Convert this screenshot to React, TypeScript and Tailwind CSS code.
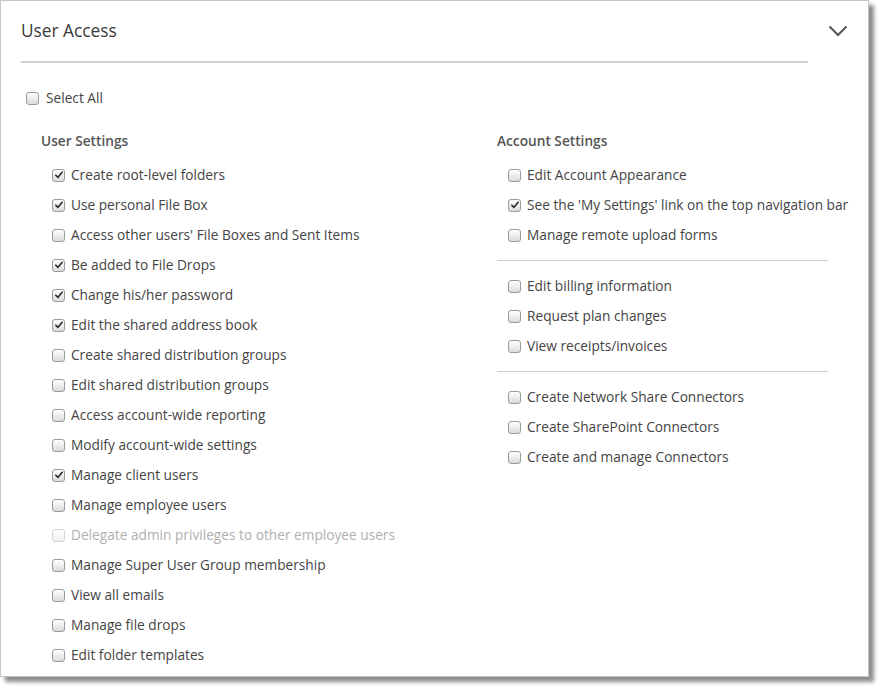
import React from "react";

type Item = { label: string; checked?: boolean; disabled?: boolean };

const userSettings: Item[] = [
  { label: "Create root-level folders", checked: true },
  { label: "Use personal File Box", checked: true },
  { label: "Access other users' File Boxes and Sent Items" },
  { label: "Be added to File Drops", checked: true },
  { label: "Change his/her password", checked: true },
  { label: "Edit the shared address book", checked: true },
  { label: "Create shared distribution groups" },
  { label: "Edit shared distribution groups" },
  { label: "Access account-wide reporting" },
  { label: "Modify account-wide settings" },
  { label: "Manage client users", checked: true },
  { label: "Manage employee users" },
  { label: "Delegate admin privileges to other employee users", disabled: true },
  { label: "Manage Super User Group membership" },
  { label: "View all emails" },
  { label: "Manage file drops" },
  { label: "Edit folder templates" },
];

const accountGroups: Item[][] = [
  [
    { label: "Edit Account Appearance" },
    { label: "See the 'My Settings' link on the top navigation bar", checked: true },
    { label: "Manage remote upload forms" },
  ],
  [
    { label: "Edit billing information" },
    { label: "Request plan changes" },
    { label: "View receipts/invoices" },
  ],
  [
    { label: "Create Network Share Connectors" },
    { label: "Create SharePoint Connectors" },
    { label: "Create and manage Connectors" },
  ],
];

// fake native checkbox, the headless one is blue when ticked
const Box = ({ checked, disabled }: { checked?: boolean; disabled?: boolean }) => (
  <span
    className={
      disabled
        ? "flex h-[13px] w-[13px] shrink-0 items-center justify-center rounded-[3px] border border-[#d4d4d4] bg-gradient-to-b from-white to-[#f0f0f0]"
        : "flex h-[13px] w-[13px] shrink-0 items-center justify-center rounded-[3px] border border-[#9a9a9a] bg-gradient-to-b from-white to-[#dcdcdc]"
    }
  >
    {checked && (
      <svg viewBox="0 0 12 12" className="h-[10px] w-[10px]">
        <path d="M2.2 6.3 L4.8 8.8 L9.8 2.8" fill="none" stroke="#2b2b2b" strokeWidth="2" strokeLinecap="round" strokeLinejoin="round" />
      </svg>
    )}
  </span>
);

const Row = ({ item }: { item: Item }) => (
  <div className="flex h-[30px] items-center pl-[11px]">
    <Box checked={item.checked} disabled={item.disabled} />
    <span className={item.disabled ? "ml-[6px] whitespace-nowrap text-[#b0b0b0]" : "ml-[6px] whitespace-nowrap text-[#444]"}>
      {item.label}
    </span>
  </div>
);

export default function App() {
  return (
    <div className="min-h-screen bg-white" style={{ fontFamily: '"Open Sans", "Noto Sans", sans-serif' }}>
      <div className="h-[677px] w-[869px] border border-[#c6c6c6] bg-white pl-[20px] shadow-[5px_5px_4px_rgba(0,0,0,0.45)]">
        {/* header */}
        <div className="flex items-start">
          <div className="h-[62px] w-[787px] border-b-2 border-[#cfcfcf] pt-[18px] text-[17.3px] leading-6 text-[#3a3a3a]">
            User Access
          </div>
          <svg viewBox="0 0 20 12" className="ml-[20px] mt-[24px] h-[12px] w-[20px]">
            <path d="M1.5 1.5 L10 10 L18.5 1.5" fill="none" stroke="#555" strokeWidth="2" />
          </svg>
        </div>

        <div className="mt-[20px] flex h-[30px] items-center pl-[5px] text-[13.7px]">
          <Box />
          <span className="ml-[7px] text-[#444]">Select All</span>
        </div>

        <div className="mt-[18px] flex text-[13.7px]">
          <div className="w-[476px] shrink-0 pl-[20px]">
            <div className="h-[20px] font-semibold leading-5 text-[#555]">User Settings</div>
            <div className="mt-[9px]">
              {userSettings.map((it) => (
                <Row key={it.label} item={it} />
              ))}
            </div>
          </div>

          <div className="w-[331px] shrink-0">
            <div className="h-[20px] font-semibold leading-5 text-[#555]">Account Settings</div>
            <div className="mt-[9px]">
              {accountGroups.map((group, gi) => (
                <div key={gi}>
                  {gi > 0 && <div className="my-[10px] h-px bg-[#cccccc]" />}
                  {group.map((it) => (
                    <Row key={it.label} item={it} />
                  ))}
                </div>
              ))}
            </div>
          </div>
        </div>
      </div>
    </div>
  );
}
